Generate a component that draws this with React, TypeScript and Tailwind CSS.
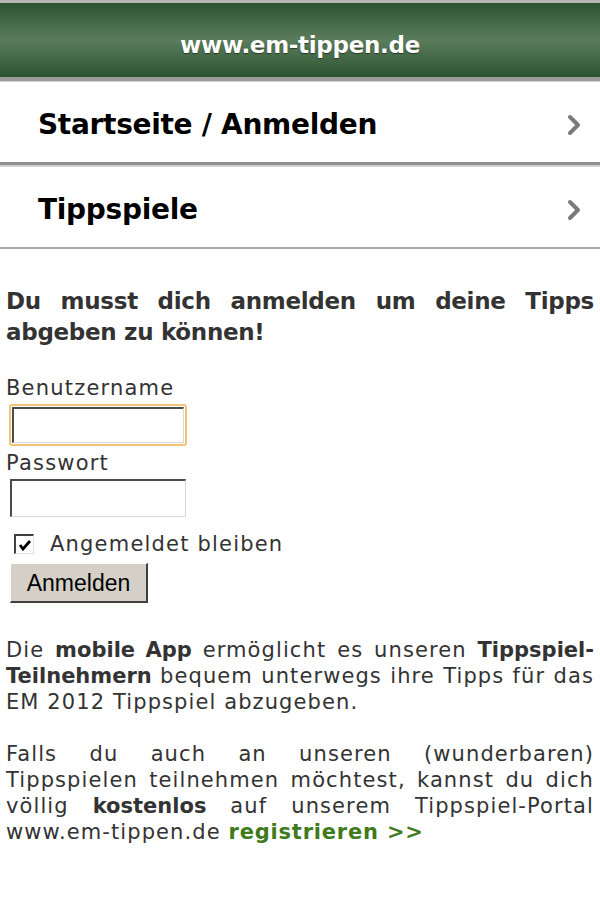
function Chevron() {
  return (
    <svg width="16" height="24" viewBox="0 0 16 24" className="text-[#7a7a7a]">
      <polyline points="4,4 12,12 4,20" fill="none" stroke="currentColor" strokeWidth="4" strokeLinecap="round" strokeLinejoin="round" />
    </svg>
  );
}

function MenuItem({ label }: { label: string }) {
  return (
    <div className="flex items-center justify-between h-[80px] pl-[38px] pr-[18px] pt-[5px] bg-white">
      <span className="text-[28px] font-bold text-black tracking-[-0.3px]">{label}</span>
      <Chevron />
    </div>
  );
}

function B({ children, className = 'tracking-normal' }: { children: React.ReactNode; className?: string }) {
  return <b className={`font-bold ${className}`}>{children}</b>;
}

export default function App() {
  return (
    <div className="w-[600px] min-h-[900px] bg-white text-[#333] font-['Verdana','DejaVu_Sans',sans-serif]">
      {/* Header */}
      <div className="border-t-[3px] border-[#b5b5b5]">
        <div className="h-[74px] pt-[10px] flex items-center justify-center bg-linear-to-b from-[#2c5330] via-[#5b7d5c] to-[#2c5330]">
          <span className="text-white font-bold text-[23px] tracking-[-0.3px] [text-shadow:0_1px_1px_rgba(0,0,0,0.5)]">
            www.em-tippen.de
          </span>
        </div>
        <div className="h-[5px] bg-[#9c9c9c] border-b border-[#cfcfcf]" />
      </div>

      {/* Menu */}
      <MenuItem label="Startseite / Anmelden" />
      <div className="h-[5px] bg-[#d0d0d0] border-t-[3px] border-[#8e8e8e]" />
      <MenuItem label="Tippspiele" />
      <div className="h-[2px] bg-[#a8a8a8]" />

      {/* Content */}
      <div className="px-[6px] pt-[37px]">
        <h2 className="text-[23px] font-bold leading-[31px] text-justify tracking-[-0.3px] text-[#333]">
          Du musst dich anmelden um deine Tipps abgeben zu können!
        </h2>

        <div className="mt-[28px] text-[21px] leading-[24px] tracking-[1.2px]">
          <div>Benutzername</div>
          <div className="mt-[4px] ml-[3px] w-[178px] h-[42px] rounded-[3px] border-2 border-[#f0c474] p-px">
            <input className="w-full h-full bg-white border-t-2 border-l-2 border-b border-r border-t-[#4a4a4a] border-l-[#4a4a4a] border-b-[#d8d8d8] border-r-[#d8d8d8] outline-none" />
          </div>
          <div className="mt-[5px]">Passwort</div>
          <div className="mt-[4px] ml-[4px] w-[176px] h-[38px]">
            <input
              type="password"
              className="w-full h-full bg-white border-t-2 border-l-2 border-b border-r border-t-[#4a4a4a] border-l-[#4a4a4a] border-b-[#d8d8d8] border-r-[#d8d8d8] outline-none"
            />
          </div>
          <div className="mt-[15px] flex items-center">
            <span className="ml-[8px] w-[20px] h-[20px] bg-white flex items-center justify-center border-t-2 border-l-2 border-b border-r border-t-[#404040] border-l-[#404040] border-b-[#e0e0e0] border-r-[#e0e0e0]">
              <svg width="14" height="12" viewBox="0 0 14 12">
                <polyline points="2,6 5,10 12,2" fill="none" stroke="#000" strokeWidth="2.8" />
              </svg>
            </span>
            <span className="ml-[16px]">Angemeldet bleiben</span>
          </div>
          <button className="mt-[7px] ml-[4px] w-[138px] h-[40px] bg-[#d4d0c8] text-black text-[23px] tracking-normal font-['Liberation_Sans',Arial,sans-serif] border-t border-l border-t-white border-l-white border-b-2 border-r-2 border-b-[#404040] border-r-[#404040]">
            Anmelden
          </button>
        </div>

        <div className="mt-[34px] text-[21px] leading-[26px] tracking-[1.1px] text-justify">
          <p>
            Die <B>mobile App</B> ermöglicht es unseren <B>Tippspiel-Teilnehmern</B> bequem unterwegs ihre Tipps für das EM 2012 Tippspiel abzugeben.
          </p>
          <p className="mt-[26px]">
            Falls du auch an unseren (wunderbaren) Tippspielen teilnehmen möchtest, kannst du dich völlig <B>kostenlos</B> auf unserem Tippspiel-Portal www.em-tippen.de{' '}
            <B className="tracking-[0.8px] text-[#3f7a1c]">registrieren &gt;&gt;</B>
          </p>
        </div>
      </div>
    </div>
  );
}
